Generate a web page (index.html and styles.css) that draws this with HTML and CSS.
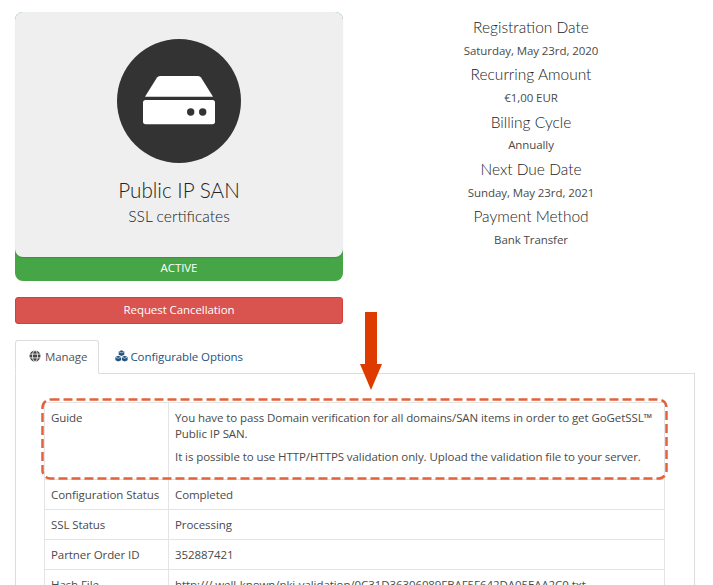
FILE: index.html
```html
<!DOCTYPE html>
<html lang="en">
<head>
<meta charset="utf-8">
<title>Public IP SAN</title>
<link rel="stylesheet" href="styles.css">
</head>
<body>
<main class="page">
  <div class="overview">
    <div class="left">
      <div class="status-card">
        <div class="product-card">
          <div class="product-icon">
            <svg width="74" height="50" viewBox="0 0 74 50" aria-hidden="true">
              <path d="M3 20.700 L15 1.500 Q16 0 18 0 L56 0 Q58 0 59 1.500 L71 20.700 Z" fill="#fff"/>
              <path d="M3.500 24 H70.500 Q73 24 73 26.500 V45.500 Q73 48.300 70.500 48.300 H3.500 Q1 48.300 1 45.500 V26.500 Q1 24 3.500 24 Z" fill="#fff"/>
              <circle cx="48.700" cy="36" r="3.700" fill="#333"/>
              <circle cx="60.700" cy="36" r="3.700" fill="#333"/>
            </svg>
          </div>
          <h1 class="product-name">Public IP SAN</h1>
          <p class="product-group">SSL certificates</p>
        </div>
        <div class="status-label">ACTIVE</div>
      </div>
      <a class="cancel-btn">Request Cancellation</a>
    </div>
    <div class="details">
      <h4>Registration Date</h4><p>Saturday, May 23rd, 2020</p>
      <h4>Recurring Amount</h4><p>€1,00 EUR</p>
      <h4>Billing Cycle</h4><p>Annually</p>
      <h4>Next Due Date</h4><p>Sunday, May 23rd, 2021</p>
      <h4>Payment Method</h4><p>Bank Transfer</p>
    </div>
  </div>

  <div class="tabs">
    <a class="tab tab-active">
      <svg class="tab-icon" width="12" height="12" viewBox="0 0 12 12" aria-hidden="true">
        <circle cx="6" cy="6" r="5.500" fill="#444"/>
        <g fill="none" stroke="#fff" stroke-width="0.800">
          <ellipse cx="6" cy="6" rx="2.500" ry="5.500"/>
          <path d="M0.500 4.100H11.500M0.500 7.900H11.500"/>
        </g>
      </svg>
      Manage
    </a>
    <a class="tab tab-link">
      <svg class="tab-icon" width="13" height="12" viewBox="0 0 13 12" aria-hidden="true">
        <g fill="#23537e">
          <path d="M6.500 0.300 L9.300 1.500 V4.700 L6.500 5.900 L3.700 4.700 V1.500 Z"/>
          <path d="M3.300 5.800 L6.100 7 V10.200 L3.300 11.500 L0.400 10.200 V7 Z"/>
          <path d="M9.700 5.800 L12.600 7 V10.200 L9.700 11.500 L6.900 10.200 V7 Z"/>
        </g>
        <path d="M3.900 1.700 L6.500 2.800 L9.100 1.700 M0.600 7.200 L3.300 8.300 L6 7.200 M7 7.200 L9.700 8.300 L12.400 7.200" fill="none" stroke="#fff" stroke-width="0.600"/>
      </svg>
      Configurable Options
    </a>
  </div>

  <section class="tab-panel">
    <table class="info">
      <tr class="guide-row">
        <td class="key">Guide</td>
        <td>
          <p>You have to pass Domain verification for all domains/SAN items in order to get GoGetSSL™ Public IP SAN.</p>
          <p>It is possible to use HTTP/HTTPS validation only. Upload the validation file to your server.</p>
        </td>
      </tr>
      <tr><td class="key">Configuration Status</td><td>Completed</td></tr>
      <tr><td class="key">SSL Status</td><td>Processing</td></tr>
      <tr><td class="key">Partner Order ID</td><td>352887421</td></tr>
      <tr><td class="key">Hash File</td><td>http:///.well-known/pki-validation/0C31D36306089FBAF5F642DA05EAA2C0.txt</td></tr>
    </table>
  </section>
</main>

<svg class="callout" width="627" height="83" viewBox="0 0 627 83" aria-hidden="true">
  <rect x="1.500" y="1.500" width="624" height="79" rx="8" fill="none" stroke="#e2623a" stroke-width="2.500" stroke-dasharray="9 4"/>
</svg>
<svg class="arrow" width="24" height="78" viewBox="0 0 24 78" aria-hidden="true">
  <path d="M6 0 H18 V52 H23 L12 78 L1 52 H6 Z" fill="#dd3b00"/>
</svg>
</body>
</html>
```
FILE: styles.css
```css
* { box-sizing: border-box; }
html, body { height: 585px; overflow: hidden; }
body {
  margin: 0;
  background: #fff;
  color: #4a4a4a;
  font-family: "Open Sans", sans-serif;
  font-size: 11.500px;
  letter-spacing: -0.080px;
  line-height: 17px;
  position: relative;
}
.page { padding: 12px 18px 0 15px; }
.overview {
  display: grid;
  grid-template-columns: 328px 328px;
  column-gap: 24px;
}
.status-card {
  background: #46a546;
  border-radius: 8px;
  height: 269px;
}
.product-card {
  height: 245px;
  background: #efefef;
  border-radius: 8px;
  box-shadow: 0 1px 1px rgba(0,0,0,.12);
  padding-top: 27px;
  text-align: center;
}
.product-icon {
  width: 124px;
  height: 124px;
  margin: 0 auto;
  border-radius: 50%;
  background: #333;
  display: flex;
  align-items: center;
  justify-content: center;
}
.product-name {
  margin: 15px 0 0;
  font-family: Lato, sans-serif;
  font-weight: 300;
  font-size: 20.700px;
  letter-spacing: 0;
  line-height: 24px;
  color: #222;
}
.product-group {
  margin: 4px 0 0;
  font-family: Lato, sans-serif;
  font-weight: 300;
  font-size: 15.600px;
  letter-spacing: 0;
  line-height: 20px;
  color: #222;
}
.status-label {
  height: 24px;
  line-height: 22px;
  text-align: center;
  color: #fff;
}
.cancel-btn {
  display: block;
  margin-top: 16px;
  height: 27px;
  line-height: 24px;
  text-align: center;
  color: #fff;
  background: #d9534f;
  border: 1px solid #d43f3a;
  border-radius: 3px;
}
.details { text-align: center; }
.details h4 {
  margin: 0;
  height: 29.800px;
  font-family: Lato, sans-serif;
  font-weight: 300;
  font-size: 15.500px;
  letter-spacing: 0;
  line-height: 30px;
  color: #222;
}
.details p { margin: 0; height: 17.500px; line-height: 17.500px; }
.tabs {
  display: flex;
  margin-top: 16px;
  height: 34px;
  position: relative;
  z-index: 1;
}
.tab {
  display: flex;
  align-items: center;
  gap: 4px;
  padding: 0 11px 2px 13px;
  height: 34px;
}
.tab-active {
  background: #fff;
  border: 1px solid #ddd;
  border-bottom-color: #fff;
  border-radius: 3px 3px 0 0;
  color: #555;
}
.tab-link { color: #23537e; padding-left: 16px; gap: 2px; }
.tab-panel {
  margin-top: -1px;
  border: 1px solid #ddd;
  border-bottom: 0;
  padding: 28px 0 0 28px;
  height: 300px;
}
.info {
  width: 621px;
  border-collapse: collapse;
  table-layout: fixed;
}
.info td {
  border: 1px solid #e4e4e4;
  padding: 6px;
  height: 29.700px;
  vertical-align: top;
}
.info .key { width: 124px; }
.guide-row td { height: 77px; padding-top: 6.500px; line-height: 16px; }
.info p { margin: 0 0 7.500px; }
.info p:last-child { margin-bottom: 0; }
.callout {
  position: absolute;
  left: 41px;
  top: 398px;
}
.arrow {
  position: absolute;
  left: 359px;
  top: 312px;
}
```
